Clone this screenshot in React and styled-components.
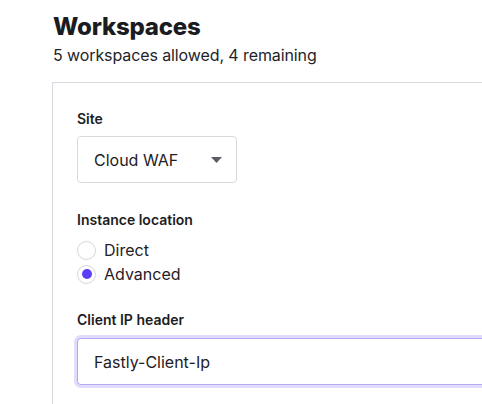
import React, { useState } from 'react'
import styled, { createGlobalStyle } from 'styled-components'

const GlobalStyle = createGlobalStyle`
  body {
    margin: 0;
    background: #ffffff;
    font-family: Inter, "Liberation Sans", sans-serif;
    color: #1c1d22;
    overflow: hidden;
  }
`

const Page = styled.div`
  box-sizing: border-box;
  height: 100vh;
  display: flex;
  flex-direction: column;
  padding: 12px 0 0 53px;
`

const Title = styled.h1`
  margin: 0;
  font-size: 24px;
  line-height: 29px;
  font-weight: 800;
  letter-spacing: -0.2px;
  color: #1a1c22;
`

const Subtitle = styled.p`
  margin: 2px 0 0;
  font-size: 16px;
  line-height: 24px;
  letter-spacing: -0.1px;
  color: #23242a;
`

const Panel = styled.div`
  flex: 1;
  margin: 15px 0 0 -1px;
  border-top: 1px solid #d9d9e1;
  border-left: 1px solid #d9d9e1;
  padding: 26px 0 0 24px;
  display: flex;
  flex-direction: column;
`

const Field = styled.div`
  display: flex;
  flex-direction: column;
  margin-bottom: ${({ gap }) => gap}px;
`

const Label = styled.label`
  font-size: 14px;
  line-height: 20px;
  font-weight: 600;
  color: #1c1d22;
  margin-bottom: ${({ gap }) => gap}px;
`

const Select = styled.div`
  box-sizing: border-box;
  width: 160px;
  height: 47px;
  border: 1px solid #d8d8de;
  border-radius: 4px;
  display: flex;
  align-items: center;
  padding: 0 14px 0 16px;
  font-size: 16px;
  color: #1f2026;
`

const Caret = styled.svg`
  margin-left: auto;
  width: 11px;
  height: 6px;
  fill: #5c5d66;
`

const RadioList = styled.div`
  display: flex;
  flex-direction: column;
  gap: 4px;
`

const RadioRow = styled.label`
  display: flex;
  align-items: center;
  gap: 8px;
  font-size: 16px;
  line-height: 20px;
  color: #1f2026;
`

const RadioCircle = styled.span`
  box-sizing: border-box;
  width: 19px;
  height: 19px;
  border-radius: 50%;
  border: 1px solid #d6d6de;
  background: #fff;
  display: flex;
  align-items: center;
  justify-content: center;

  &::after {
    content: '';
    width: 10px;
    height: 10px;
    border-radius: 50%;
    background: ${({ checked }) => checked ? '#5b3df5' : 'transparent'};
  }
`

const Input = styled.div`
  box-sizing: border-box;
  height: 47px;
  border: 1px solid #b6a8f6;
  border-right: none;
  border-radius: 4px 0 0 4px;
  box-shadow: 0 0 0 3px #e1dbfc;
  display: flex;
  align-items: center;
  padding-left: 16px;
  font-size: 16px;
  color: #1f2026;
`

const options = ['Direct', 'Advanced']

const App = () => {
  const [location, setLocation] = useState('Advanced')

  return (
    <Page>
      <GlobalStyle/>
      <Title>Workspaces</Title>
      <Subtitle>5 workspaces allowed, 4 remaining</Subtitle>
      <Panel>
        <Field gap={27}>
          <Label gap={7}>Site</Label>
          <Select>
            Cloud WAF
            <Caret viewBox="0 0 11 6">
              <path d="M0 0h11L5.5 6z"/>
            </Caret>
          </Select>
        </Field>
        <Field gap={26}>
          <Label gap={10}>Instance location</Label>
          <RadioList>
            {options.map(option => (
              <RadioRow key={option}
                        onClick={() => setLocation(option)}>
                <RadioCircle checked={location === option}/>
                {option}
              </RadioRow>
            ))}
          </RadioList>
        </Field>
        <Field gap={0}>
          <Label gap={8}>Client IP header</Label>
          <Input>Fastly-Client-Ip</Input>
        </Field>
      </Panel>
    </Page>
  )
}

export default App
